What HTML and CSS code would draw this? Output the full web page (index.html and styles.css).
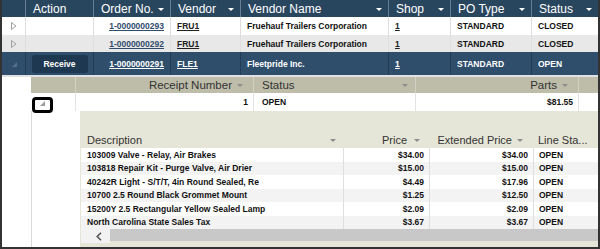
FILE: index.html
```html
<!DOCTYPE html>
<html>
<head>
<meta charset="utf-8">
<link rel="stylesheet" href="styles.css">
</head>
<body>
<div class="frame">
  <div class="row hdr">
    <div class="c"></div>
    <div class="c"><span>Action</span></div>
    <div class="c"><span>Order No.</span><i class="caret"></i></div>
    <div class="c"><span>Vendor</span><i class="caret"></i></div>
    <div class="c"><span>Vendor Name</span><i class="caret"></i></div>
    <div class="c"><span>Shop</span><i class="caret"></i></div>
    <div class="c"><span>PO Type</span><i class="caret"></i></div>
    <div class="c"><span>Status</span><i class="caret"></i></div>
  </div>

  <div class="row data r1">
    <div class="c exp"><svg width="6" height="8" viewBox="0 0 6 8"><polygon points="0.5,0.5 5,4 0.5,7.5" fill="none" stroke="#a0a0a0" stroke-width="1"/></svg></div>
    <div class="c"></div>
    <div class="c num"><a class="order">1-0000000293</a></div>
    <div class="c"><a class="link">FRU1</a></div>
    <div class="c">Fruehauf Trailers Corporation</div>
    <div class="c"><a class="link">1</a></div>
    <div class="c">STANDARD</div>
    <div class="c">CLOSED</div>
  </div>

  <div class="row data r2">
    <div class="c exp"><svg width="6" height="8" viewBox="0 0 6 8"><polygon points="0.5,0.5 5,4 0.5,7.5" fill="none" stroke="#a0a0a0" stroke-width="1"/></svg></div>
    <div class="c"></div>
    <div class="c num"><a class="order">1-0000000292</a></div>
    <div class="c"><a class="link">FRU1</a></div>
    <div class="c">Fruehauf Trailers Corporation</div>
    <div class="c"><a class="link">1</a></div>
    <div class="c">STANDARD</div>
    <div class="c">CLOSED</div>
  </div>

  <div class="row data sel">
    <div class="c exp"><svg width="5" height="5" viewBox="0 0 5 5"><polygon points="5,0 5,5 0,5" fill="#52708c"/></svg></div>
    <div class="c act"><span class="btn">Receive</span></div>
    <div class="c num"><a class="order">1-0000000291</a></div>
    <div class="c"><a class="link">FLE1</a></div>
    <div class="c">Fleetpride Inc.</div>
    <div class="c"><a class="link">1</a></div>
    <div class="c">STANDARD</div>
    <div class="c">OPEN</div>
  </div>

  <div class="gap"></div>

  <div class="detail">
    <div class="detail-left"></div>
    <div class="nested">
      <div class="nrow nhdr">
        <div class="c"></div>
        <div class="c end"><span>Receipt Number</span><i class="ncaret"></i></div>
        <div class="c split"><span>Status</span><i class="ncaret"></i></div>
        <div class="c end"><span>Parts</span><i class="ncaret"></i></div>
        <div class="c"></div>
      </div>
      <div class="nrow rrow">
        <div class="c nexp">
          <svg width="5" height="5" viewBox="0 0 5 5"><polygon points="5,0 5,5 0,5" fill="#9a9a9a"/></svg>
          <span class="mark"></span>
        </div>
        <div class="c num">1</div>
        <div class="c">OPEN</div>
        <div class="c num">$81.55</div>
        <div class="c"></div>
      </div>
      <div class="sub">
        <div class="sub-left"></div>
        <div class="panel">
          <div class="irow ihdr">
            <div class="c split"><span>Description</span><i class="ncaret"></i></div>
            <div class="c end price"><span>Price</span><i class="ncaret"></i></div>
            <div class="c end ext"><span>Extended Price</span><i class="ncaret"></i></div>
            <div class="c"><span>Line Sta...</span></div>
          </div>
          <div class="irow idata">
            <div class="c">103009 Valve - Relay, Air Brakes</div>
            <div class="c num">$34.00</div>
            <div class="c num">$34.00</div>
            <div class="c">OPEN</div>
          </div>
          <div class="irow idata alt">
            <div class="c">103818 Repair Kit - Purge Valve, Air Drier</div>
            <div class="c num">$15.00</div>
            <div class="c num">$15.00</div>
            <div class="c">OPEN</div>
          </div>
          <div class="irow idata">
            <div class="c">40242R Light - S/T/T, 4in Round Sealed, Re</div>
            <div class="c num">$4.49</div>
            <div class="c num">$17.96</div>
            <div class="c">OPEN</div>
          </div>
          <div class="irow idata alt">
            <div class="c">10700 2.5 Round Black Grommet Mount</div>
            <div class="c num">$1.25</div>
            <div class="c num">$12.50</div>
            <div class="c">OPEN</div>
          </div>
          <div class="irow idata">
            <div class="c">15200Y 2.5 Rectangular Yellow Sealed Lamp</div>
            <div class="c num">$2.09</div>
            <div class="c num">$2.09</div>
            <div class="c">OPEN</div>
          </div>
          <div class="irow idata alt">
            <div class="c">North Carolina State Sales Tax</div>
            <div class="c num">$3.67</div>
            <div class="c num">$3.67</div>
            <div class="c">OPEN</div>
          </div>
          <div class="scroll">
            <div class="sb-btn"><svg width="6" height="9" viewBox="0 0 6 9"><polyline points="5,0.8 1.2,4.5 5,8.2" fill="none" stroke="#555" stroke-width="1.6"/></svg></div>
            <div class="sb-track"></div>
          </div>
        </div>
      </div>
    </div>
  </div>
</div>
</body>
</html>
```

FILE: styles.css
```css
* { box-sizing: border-box; }

body {
  margin: 0;
  background: #fff;
  font-family: "Liberation Sans", Arial, sans-serif;
}

.frame {
  width: 600px;
  height: 249px;
  border: 2px solid #333;
  border-top: 0;
  overflow: hidden;
  background: #fff;
}

.row {
  display: grid;
  grid-template-columns: 23px 68px 77px 70px 148px 62px 81px 67px;
}

.row .c {
  display: flex;
  align-items: center;
  white-space: nowrap;
  overflow: hidden;
}

/* main header */
.hdr {
  height: 17px;
  background: #29465f;
  color: #fff;
  font-size: 12px;
}
.hdr .c {
  justify-content: space-between;
  padding: 0 6px 0 7px;
  border-left: 1px solid #667f97;
}
.hdr .c:first-child { border-left: 0; }

.caret {
  display: block;
  width: 0;
  height: 0;
  border-left: 3px solid transparent;
  border-right: 3px solid transparent;
  border-top: 3px solid #fff;
  margin-top: 1px;
}

/* main rows */
.data {
  font-size: 8.5px;
  font-weight: bold;
  color: #111;
}
.data .c {
  padding: 0 6px;
  border-left: 1px solid #dedede;
}
.data .c:first-child { border-left: 0; }
.data .exp { padding-left: 9px; }
.r1 { height: 18px; background: #fff; }
.r2 { height: 17px; background: #e8e8e8; }
.sel { height: 23px; background: #2e4e6c; color: #fff; }
.sel .c { border-left-color: #213d56; }
.sel .exp { padding-left: 10px; padding-top: 2px; }

.num { justify-content: flex-end; }

.order {
  color: #2f4c6b;
  text-decoration: underline;
}
.link {
  color: #222;
  text-decoration: underline;
}
.sel .order, .sel .link { color: #fff; }

.data .act {
  justify-content: center;
  padding: 0;
}
.btn {
  width: 56px;
  height: 18px;
  background: #1d3850;
  border-radius: 3px;
  color: #fff;
  display: flex;
  align-items: center;
  justify-content: center;
}

.gap {
  height: 2px;
  background: #dfe2e5;
}

/* nested section */
.detail {
  display: flex;
  height: 170px;
}
.detail-left {
  width: 29px;
  background: #fff;
}
.nested { width: 567px; }

.nrow {
  display: grid;
  grid-template-columns: 44px 178px 162px 163px 20px;
}
.nrow .c {
  display: flex;
  align-items: center;
  white-space: nowrap;
}

.nhdr {
  height: 16px;
  background: #bebdaa;
  color: #333;
  font-size: 11.5px;
}
.nhdr .c { border-left: 1px solid #d2d1c3; }
.nhdr .c:first-child { border-left: 0; }
.nhdr .end {
  justify-content: flex-end;
  gap: 5px;
  padding-right: 10px;
}
.nhdr .split {
  justify-content: space-between;
  padding: 0 7px 0 8px;
}

.ncaret {
  display: block;
  width: 0;
  height: 0;
  border-left: 3.5px solid transparent;
  border-right: 3.5px solid transparent;
  border-top: 3px solid #8d8d8d;
  margin-top: 1px;
}

.rrow {
  height: 18px;
  background: #fff;
  font-size: 8.5px;
  font-weight: bold;
  color: #111;
}
.rrow .c {
  border-left: 1px solid #e3e3e3;
  padding: 0 5px 0 8px;
}
.rrow .c:first-child { border-left: 0; }
.rrow .nexp {
  position: relative;
  padding-left: 9px;
  padding-top: 3px;
  overflow: visible;
}
.mark {
  position: absolute;
  left: 1px;
  top: 4px;
  width: 21px;
  height: 16px;
  border: 3px solid #000;
  border-radius: 4px;
}

.sub {
  display: flex;
  height: 136px;
}
.sub-left {
  width: 49px;
  border-left: 1px solid #d9d9d9;
  background: #fff;
}
.panel {
  width: 518px;
  background: #e6e6d8;
  padding: 21px 0 0 1px;
}

.irow {
  display: grid;
  grid-template-columns: 262px 86px 104px 65px;
}
.irow .c {
  display: flex;
  align-items: center;
  white-space: nowrap;
  overflow: hidden;
}

.ihdr {
  height: 16px;
  color: #333;
  font-size: 11px;
}
.ihdr .c { padding-left: 5px; }
.ihdr .split {
  justify-content: space-between;
  padding: 0 7px 0 6px;
}
.ihdr .end {
  justify-content: flex-end;
}
.ihdr .price { gap: 7px; padding-right: 9px; }
.ihdr .ext { gap: 5px; padding-right: 10px; }

.idata {
  height: 13.5px;
  background: #fff;
  font-size: 8.5px;
  font-weight: bold;
  color: #111;
}
.idata.alt { background: #f3f3f3; }
.idata .c {
  padding: 0 5px;
  border-left: 1px solid #dedede;
}
.idata .c:first-child {
  border-left: 0;
  padding-left: 6px;
}

.scroll {
  display: flex;
  height: 14px;
}
.sb-btn {
  width: 29px;
  background: #f2f2f2;
  display: flex;
  align-items: center;
  padding-left: 15px;
}
.sb-track {
  flex: 1;
  background: #c8c8c8;
  margin-bottom: 2px;
}
```
